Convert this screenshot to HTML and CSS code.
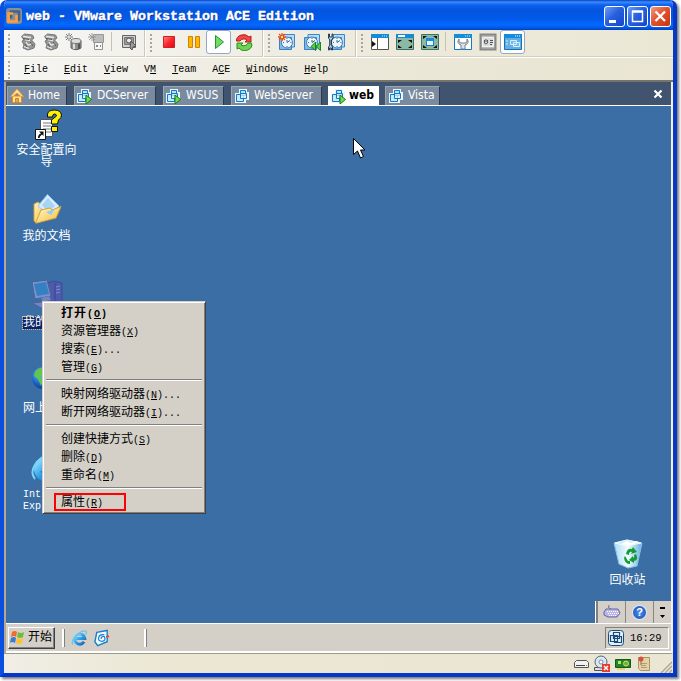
FILE: index.html
```html
<!DOCTYPE html>
<html lang="zh-CN">
<head>
<meta charset="utf-8">
<title>web - VMware Workstation ACE Edition</title>
<link rel="stylesheet" href="styles.css">
</head>
<body>
<svg class="defs" aria-hidden="true">
  <defs>
    <linearGradient id="folder" x1="0" y1="0" x2="1" y2="1"><stop offset="0" stop-color="#fffbd0"/><stop offset="1" stop-color="#f3bd3b"/></linearGradient>
    <linearGradient id="ie" x1="0" y1="0" x2="1" y2="1"><stop offset="0" stop-color="#9be3ff"/><stop offset=".5" stop-color="#2fa1e8"/><stop offset="1" stop-color="#1263b4"/></linearGradient>
    <linearGradient id="red" x1="0" y1="0" x2="1" y2="1"><stop offset="0" stop-color="#ff8a80"/><stop offset=".5" stop-color="#f82830"/><stop offset="1" stop-color="#d80b12"/></linearGradient>
    <linearGradient id="bin" x1="0" y1="0" x2="1" y2="0"><stop offset="0" stop-color="#a9dcf4"/><stop offset=".5" stop-color="#f1fbff"/><stop offset="1" stop-color="#62b0df"/></linearGradient>
    <radialGradient id="globe" cx=".4" cy=".3" r=".8"><stop offset="0" stop-color="#6cc8ff"/><stop offset=".6" stop-color="#1863c8"/><stop offset="1" stop-color="#0b2c7a"/></radialGradient>
  </defs>
  <symbol id="vm" viewBox="0 0 14 14">
    <path d="M0 4h4V0h8v3h2v8h-3v3H0z" fill="#e9f5fd"/>
    <path d="M1.500 5.500h7v7h-7z" fill="#c6eaff" stroke="#1379c4"/>
    <path d="M5.500 1.500h5v5h-5z" fill="#a5dcff" fill-opacity=".75" stroke="#1379c4"/>
    <path d="M5.500 4.500h6v5h-6z" fill="#e4f5ff" fill-opacity=".7" stroke="#1379c4"/>
  </symbol>
  <symbol id="clock" viewBox="0 0 18 18">
    <path d="M5 1.500h11.500V14H5z" fill="#b8dcf8" stroke="#3b87c7"/>
    <path d="M1.500 4.500h12v12h-12z" fill="#7fb9ea" stroke="#3b80c0"/>
    <circle cx="9" cy="9.500" r="5.500" fill="#eef7fd" stroke="#397bb7"/>
    <path d="M9 9.500V7M9 9.500l3-2M9 5v1M9 13v1M5 9.500h1M12.500 9.500h1" stroke="#426784" fill="none"/>
  </symbol>
  <symbol id="usbdev" viewBox="0 0 16 18">
    <path d="M1.500 3.500l3-2.500 8 1 1.500 3-2.500 2 3.500 4-1 4-6 2-5-2 1-3-2-4 2-1z" fill="#969696" stroke="#777"/>
    <path d="M3 3.500l8 1M5 6.500l5 1M6 9l2 3 4-1M4 13.500l5 2" stroke="#e7e7e7" stroke-width="1.300" fill="none"/>
    <path d="M3 5.500l6 1M5 11l2 3M10 9l3 4" stroke="#555" fill="none"/>
  </symbol>
  <symbol id="iee" viewBox="0 0 18 18">
    <path d="M13.800 13A5.400 5.400 0 1 1 14.600 9.500H5" fill="none" stroke="url(#ie)" stroke-width="3.200"/>
    <path d="M2 16C-1 12 8 2 14 1.500c3-.2 2.500 2.500 1.500 4" fill="none" stroke="#65c6ed" stroke-width="1.300"/>
  </symbol>
</svg>

<main class="window">
  <header class="titlebar">
    <svg class="applogo" viewBox="0 0 16 16"><rect x="0" y="0" width="16" height="16" rx="3" fill="#8a8f96"/><path d="M5 10.500v-7h8v8h-3" fill="none" stroke="#3f6588" stroke-width="2.500"/><path d="M7 5.500H2.500v8h8V7" fill="none" stroke="#ff9d42" stroke-width="2.700"/></svg>
    <h1>web - VMware Workstation ACE Edition</h1>
    <div class="caption">
      <button class="cap"><svg viewBox="0 0 21 21"><path d="M5 14h7v3H5z" fill="#fff"/></svg></button>
      <button class="cap"><svg viewBox="0 0 21 21"><path d="M5 6h11M5 5h11M5.500 5v10.500h10V5" fill="none" stroke="#fff" stroke-width="1.500"/></svg></button>
      <button class="cap close"><svg viewBox="0 0 21 21"><path d="M5.500 5.500l9.500 9.500M15 5.500L5.500 15" stroke="#fff" stroke-width="2.300"/></svg></button>
    </div>
  </header>

  <div class="toolbar">
    <div class="group g1"><i class="grip"></i>
      <button><svg viewBox="0 0 16 18"><use href="#usbdev" width="16" height="18"/></svg></button>
      <button><svg viewBox="0 0 16 18"><use href="#usbdev" width="16" height="18"/></svg></button>
      <button><svg viewBox="0 0 18 18"><path d="M6 8v7q5 3.500 10 0V8z" fill="#909090" stroke="#606060"/><path d="M8 9v7h2V9z" fill="#ddd"/><path d="M13 9v7h2V9z" fill="#555"/><ellipse cx="11" cy="8" rx="5" ry="2.500" fill="#ddd" stroke="#777"/><path d="M4 0v8M0 4h8M1 1l6 6M7 1L1 7" stroke="#777"/><path d="M4 3v2M3 4h2" stroke="#fff"/></svg></button>
      <button><svg viewBox="0 0 18 18"><path d="M5.500 1.500h10v8h-10z" fill="#bcbcbc" stroke="#989898"/><path d="M6.500 9.500h8v7h-8z" fill="#f8f8f8" stroke="#929292"/><path d="M8 12h2v2H8zM12 12h1v2h-1z" fill="#888"/><path d="M4 0v8M0 4h8M1 1l6 6M7 1L1 7" stroke="#999"/></svg></button>
      <i class="split"></i>
      <button class="last"><svg viewBox="0 0 18 18"><path d="M2.500 2.500h13v12h-13z" fill="#d1d1d1" stroke="#666"/><path d="M4.500 4.500h9v7h-9z" fill="#9a9a9a" stroke="#777"/><circle cx="9" cy="7.500" r="2.500" fill="#eee" stroke="#555"/><path d="M11 8l5 5-3 1-1 3-2-2z" fill="#9a9a9a" stroke="#555"/></svg></button>
    </div>
    <div class="group g2"><i class="grip"></i>
      <button><svg viewBox="0 0 18 18"><path d="M3.500 3.500h11v11h-11z" fill="url(#red)" stroke="#d51c20"/></svg></button>
      <button><svg viewBox="0 0 18 18"><path d="M3.500 3.500h4v11h-4zM10.500 3.500h4v11h-4z" fill="#ffb800" stroke="#d28200"/></svg></button>
      <button class="on"><svg viewBox="0 0 18 18"><path d="M5.500 2.500l8 6.500-8 6.500z" fill="#72dc67" stroke="#219732"/></svg></button>
      <button><svg viewBox="0 0 18 18"><path d="M1.500 8A7 6 0 0 1 14 4l2-1v6h-6l2-2a4.500 4 0 0 0-7 1z" fill="#f24643" stroke="#b81c1c"/><path d="M16.500 10A7 6 0 0 1 4 15l-2 1v-6h6l-2 2a4.500 4 0 0 0 7-2z" fill="#70d451" stroke="#278c25"/></svg></button>
    </div>
    <div class="group g3"><i class="grip"></i>
      <button><svg viewBox="0 0 18 18"><use href="#clock"/><path d="M4 0v8M0 4h8M1 1l6 6M7 1L1 7" stroke="#f44d18" stroke-width="1.300"/><path d="M3 4h2" stroke="#fff35c" stroke-width="2"/></svg></button>
      <button><svg viewBox="0 0 18 18"><use href="#clock"/><path d="M12.500 9v8.500l-4.500-4zM17.500 9v8.500l-4.500-4z" fill="#57cc46" stroke="#168425"/></svg></button>
      <button><svg viewBox="0 0 18 18"><use href="#clock"/><path d="M.5 1v4l1.500 2v5L.5 14v3h1v-2h2v2h1v-3L3.500 12V7L5 5V1H4v3H1.500V1z" fill="#c7d3df" stroke="#263e56"/></svg></button>
    </div>
    <div class="group g4"><i class="grip"></i>
      <button><svg viewBox="0 0 18 18"><path d="M.5 1.500h17v15H.5z" fill="#fff" stroke="#545454"/><path d="M0 1h18v4H0z" fill="#168bd5"/><path d="M6.500 5v11" stroke="#555"/><path d="M1 8l4 3-4 3z" fill="#111"/><path d="M11 3h1M13 3h1M15 3h1" stroke="#c5e9ff"/></svg></button>
      <button><svg viewBox="0 0 18 18"><path d="M.5 1.500h17v15H.5z" fill="#8abaa5" stroke="#406e65"/><path d="M0 1h18v4H0z" fill="#1989d6"/><path d="M2 2h7v2H2z" fill="#fff"/><path d="M2 7h4l-4 3zM16 7h-4l4 3zM2 15h4l-4-3zM16 15h-4l4-3z" fill="#111"/></svg></button>
      <button><svg viewBox="0 0 18 18"><path d="M.5 1.500h17v15H.5z" fill="#89b9a3" stroke="#3d7463"/><path d="M2 3h4L2 6zM16 3h-4l4 3zM2 15h4l-4-3zM16 15h-4l4-3z" fill="#111"/><rect x="5.500" y="5.500" width="7" height="7" fill="#e9f3fa" stroke="#187fd0"/><path d="M5 5h8v3H5z" fill="#168bde"/></svg></button>
      <i class="split"></i>
      <button><svg viewBox="0 0 18 18"><path d="M.5 1.500h17v15H.5z" fill="#fff" stroke="#147bc2"/><path d="M0 1h18v4H0z" fill="#168bd8"/><path d="M11 3h1M13 3h1M15 3h1" stroke="#c5e9ff"/><path d="M5 6q-3 4 2 6v4h4v-4q5-2 2-6v3l-2 1H7L5 9z" fill="#dde2e9" stroke="#728091"/></svg></button>
      <button><svg viewBox="0 0 18 18"><path d="M1.500 1.500h15v15h-15z" fill="#bbb" stroke="#888" stroke-width="2"/><path d="M3.500 4.500h11v9h-11z" fill="#ddd" stroke="#f2f2f2"/><path d="M7 6v3M5.500 7q-1 4 1.500 4t1.500-4M11 7.500h3M11 9.500h3M11 11.500h2" fill="none" stroke="#555"/></svg></button>
      <button class="on"><svg viewBox="0 0 18 18"><path d="M.5 1.500h17v15H.5z" fill="#62afe4" stroke="#176fba"/><path d="M0 1h18v4H0z" fill="#168bd8"/><path d="M11 3h1M13 3h1M15 3h1" stroke="#fff"/><path d="M6.500 7.500h6v4h-6zM9.500 9.500h6v4h-6z" fill="#71baf0" stroke="#d6efff"/><path d="M2 8h2M2 11h2" stroke="#d6efff"/></svg></button>
    </div>
  </div>

  <nav class="menubar"><i class="grip"></i>
    <span><u>F</u>ile</span><span><u>E</u>dit</span><span><u>V</u>iew</span><span>V<u>M</u></span><span><u>T</u>eam</span><span>A<u>C</u>E</span><span><u>W</u>indows</span><span><u>H</u>elp</span>
  </nav>

  <section class="guest">
    <div class="tabs">
      <div class="tab home"><svg viewBox="0 0 16 16"><path d="M3.500 8h9v6.500h-9z" fill="#ffe39b" stroke="#e28b25"/><path d="M8 1l6.500 7.500H12L8 5 4 8.500H1.500z" fill="#ffe39b" stroke="#ed982c"/><path d="M6.500 10.500h3v4h-3z" fill="#e5a941" stroke="#c98928"/></svg><span>Home</span></div>
      <div class="tab dc"><svg viewBox="0 0 16 16"><use href="#vm" width="14" height="14"/><path d="M9 6l5.500 4.500L9 15z" fill="#6ae04c" stroke="#147b1c"/></svg><span>DCServer</span></div>
      <div class="tab wsus"><svg viewBox="0 0 16 16"><use href="#vm" width="14" height="14"/><path d="M9 6l5.500 4.500L9 15z" fill="#6ae04c" stroke="#147b1c"/></svg><span>WSUS</span></div>
      <div class="tab ws"><svg viewBox="0 0 16 16"><use href="#vm" x="1" y="0" width="14" height="14"/></svg><span>WebServer</span></div>
      <div class="tab active"><svg viewBox="0 0 16 16"><use href="#vm" width="14" height="14"/><path d="M9 6l5.500 4.500L9 15z" fill="#6ae04c" stroke="#147b1c"/></svg><span>web</span></div>
      <div class="tab vista"><svg viewBox="0 0 16 16"><use href="#vm" x="1" y="0" width="14" height="14"/></svg><span>Vista</span></div>
      <button class="tabclose"><svg viewBox="0 0 10 10"><path d="M1.500 1.500l7 7M8.500 1.500l-7 7" stroke="#fff" stroke-width="2.200"/></svg></button>
    </div>

    <div class="desktop">
      <div class="shortcut s1">
        <svg viewBox="0 0 32 32"><path d="M9.500 11.500h12v17h-12z" fill="#fff" stroke="#555"/><path d="M12 15h8M12 18h8M12 21h8M12 24h8" stroke="#777"/><path d="M16.500 9V6q1-4 7-4t7 5q0 3-3 5l-1 4h-6v-4l5-4q0-2-2-2t-2 3z" fill="#fff200" stroke="#111"/><path d="M20.500 18.500h6v5h-6z" fill="#fff200" stroke="#111"/><path d="M4.500 21.500h10v10h-10z" fill="#fff" stroke="#111"/><path d="M7 30q0-4 3-4.500L8 23.500h4.500V28l-1.500-1.500Q8.500 28 8.500 30z" fill="#111"/></svg>
        <span>安全配置向<br>导</span></div>
      <div class="shortcut s2">
        <svg viewBox="0 0 32 32"><path d="M3 11l4-2 4 3v15l-6 3-2-2z" fill="url(#folder)" stroke="#d89b2a"/><path d="M7 13L16.500 1.500 28 13l-8 11z" fill="#d7edff" stroke="#91c8f1"/><path d="M11 12l6-7 7 8-7 6z" fill="#a8d3f5"/><path d="M4.500 30L10 17l9-2 2 2 9-3.500L25 25 6 30z" fill="url(#folder)" stroke="#dfa131"/><path d="M15 19l9-3-4 6z" fill="#91ccef"/></svg>
        <span>我的文档</span></div>
      <div class="shortcut s3">
        <svg viewBox="0 0 32 32"><path d="M17 4l6-2 8 2v19l-6 2-8-3z" fill="#4c5bac" stroke="#414a95"/><path d="M24 4v20" stroke="#3d4792"/><path d="M25 8l4-1M25 11l4-1M25 14l4-1" stroke="#7f90cb"/><path d="M1 3l15-2 4 16-16 3z" fill="#7596cc" stroke="#506098"/><path d="M3 5l12-2 3 12-12 2z" fill="#3580c3"/><path d="M10 19l8-2 2 4-7 3z" fill="#7585c4"/><path d="M1 24l18-2 8 6-13 3z" fill="#7585c4" stroke="#4d6199"/></svg>
        <span class="selected">我的</span></div>
      <div class="shortcut s4">
        <svg viewBox="0 0 32 32"><circle cx="12" cy="13" r="11" fill="url(#globe)"/><path d="M4 7q5-6 11-3l-2 5-4 2 3 4-2 6-3-7-4-3z" fill="#62c746"/></svg>
        <span>网上</span></div>
      <div class="shortcut s5">
        <svg viewBox="0 0 32 32"><path d="M23 24A9.500 9.500 0 1 1 25 17H9" fill="none" stroke="url(#ie)" stroke-width="6"/><path d="M4 28C-2 21 3 8 20 2" fill="none" stroke="#77d4fa" stroke-width="2"/></svg>
        <span>Int</span><span>Expl</span></div>
      <div class="shortcut s6">
        <svg viewBox="0 0 32 32"><path d="M2 6l13-3 15 3-5 23-9 2-9-4z" fill="url(#bin)" stroke="#85c4e6"/><path d="M3 6l12 3 14-3-14-3z" fill="#c7edff" stroke="#f1fbff"/><path d="M9 7l6-3 4 2 5-2 3 1-11 4z" fill="#fff"/><path d="M14 17q1-6 6-5l1-2 4 5-6 2 1-2q-3-1-3 3zM24 17q3 6-2 7v2l-5-3 4-4v2q2-1 1-3zM13 19l3 5h2v3q-5 0-6-6z" fill="#169b35"/></svg>
        <span>回收站</span></div>

      <ul class="context">
        <li class="default">打开<small>(<u>O</u>)</small></li><li>资源管理器<small>(<u>X</u>)</small></li><li>搜索<small>(<u>E</u>)...</small></li><li>管理<small>(<u>G</u>)</small></li>
        <li class="rule"></li>
        <li>映射网络驱动器<small>(<u>N</u>)...</small></li><li>断开网络驱动器<small>(<u>I</u>)...</small></li>
        <li class="rule"></li>
        <li>创建快捷方式<small>(<u>S</u>)</small></li><li>删除<small>(<u>D</u>)</small></li><li>重命名<small>(<u>M</u>)</small></li>
        <li class="rule"></li>
        <li class="marked">属性<small>(<u>R</u>)</small></li>
      </ul>

      <svg class="pointer" viewBox="0 0 12 21"><path d="M.5.5v16l4-3.500 3 7 3-1.500-3-6.500h4.500z" fill="#fff" stroke="#000"/></svg>

      <div class="langbar">
        <span class="key"><svg viewBox="0 0 18 18"><path d="M6 2q-2 3 2 4" fill="none" stroke="#6d6b9c"/><path d="M1 9l2-3h12l2 4-3 4H5l-4-2z" fill="#b9b6e4" stroke="#6962a8"/><path d="M4 8.500h11M5 10.500h11M6 12.500h8" stroke="#fff" stroke-dasharray="1 1"/></svg></span>
        <span class="help"><b>?</b></span>
        <span class="more"><svg viewBox="0 0 7 14"><path d="M1 2h5v2H1zM1 10h5l-2.500 3z" fill="#000"/></svg></span>
      </div>
    </div>

    <footer class="taskbar">
      <button class="start"><svg viewBox="0 0 17 16"><path d="M3 2q3-2 5 0L7 7Q5 5 2 7z" fill="#f36a2b"/><path d="M9 2q3 2 6 0l-1 5q-3 2-6 0z" fill="#70bd36"/><path d="M2 8q3-2 5 0l-1 5q-3-2-5 0z" fill="#357bd7"/><path d="M8 8q3 2 6 0l-1 5q-3 2-6 0z" fill="#ffc22b"/></svg><span>开始</span></button>
      <i class="bar b1"></i>
      <svg class="quick q1" viewBox="0 0 18 18"><use href="#iee"/></svg>
      <svg class="quick q2" viewBox="0 0 18 18"><path d="M4 3l11-2v12l-10 4-3-4z" fill="#f1faff" stroke="#1782c8" stroke-width="1.500"/><path d="M12 5.500q-5-1-6 3t4 4q4-1 2-5-3-1-3.500 2.500" fill="none" stroke="#1c83d4" stroke-width="1.300"/><path d="M14 8l3-1" stroke="#ed4628" stroke-width="2"/></svg>
      <i class="bar b2"></i>
      <div class="tray"><svg viewBox="0 0 16 16"><rect x=".5" y=".5" width="15" height="15" rx="3" fill="#e8f0f6" stroke="#174c79"/><path d="M2.500 5.500h7v6h-7zM5.500 2.500h6v6h-6zM6.500 6.500h7v6h-7z" fill="none" stroke="#174c79" stroke-width="1.200"/></svg><time>16:29</time></div>
    </footer>
  </section>

  <div class="statusbar">
    <svg viewBox="0 0 18 18"><path d="M2.500 7.500l2-2h10l2 2v5h-14z" fill="#f2f2f2" stroke="#555"/><path d="M4 10.500h9" stroke="#444"/><path d="M14 10h1v1h-1z" fill="#54ab42"/></svg>
    <svg viewBox="0 0 18 18"><path d="M1.500 12.500h12v3h-12z" fill="#ddd" stroke="#555"/><circle cx="8" cy="7" r="6" fill="#d9e7f3" stroke="#526579"/><circle cx="8" cy="7" r="2" fill="#fff" stroke="#738ba0"/><path d="M9 9h8v8H9z" fill="#e93b29"/><path d="M11 11l4 4M15 11l-4 4" stroke="#fff" stroke-width="1.500"/></svg>
    <svg viewBox="0 0 18 18"><path d="M1.500 4.500h15v8h-15z" fill="#238329" stroke="#11591d"/><path d="M4 6h3v3H4z" fill="#b1e96c"/><circle cx="12" cy="8.500" r="2.500" fill="#61b745" stroke="#dcdb57"/><path d="M4 13v2M6 13v2M8 13v2M10 13v2" stroke="#e0bf35"/></svg>
    <svg viewBox="0 0 18 18"><path d="M3.500 2.500h11v13h-9l-2-2z" fill="#e4d2a0" stroke="#aa956e"/><path d="M6 8.500h6M6 10.500h5M6 12.500h6" stroke="#b49a7d"/><path d="M6 6v4" stroke="#776"/><circle cx="6" cy="4" r="2.500" fill="#da5144"/></svg>
    <svg class="resize" viewBox="0 0 12 12"><path d="M1 12L12 1M5 12l7-7M9 12l3-3" stroke="#aaa58f" stroke-width="1.400"/></svg>
  </div>
</main>
</body>
</html>
```
FILE: styles.css
```css
* { box-sizing: border-box; }
body { margin: 0; width: 681px; height: 681px; overflow: hidden; background: #fff; font: 12px/12px "Liberation Mono", "Noto Sans CJK SC", monospace; color: #000; }
button { padding: 0; border: 0; background: none; font: inherit; color: inherit; }
svg { display: block; flex: none; }
u { text-underline-offset: 1px; text-decoration-thickness: 1px; }
.defs { width: 0; height: 0; position: absolute; }

.window { width: 677px; height: 677px; display: flex; flex-direction: column; border: 4px solid #0a4fe0; border-top: 0; border-right-color: #0637c5; border-bottom-color: #0637cc; border-radius: 7px 7px 0 0; background: #ece9d8; box-shadow: 2px 2px 3px #777; overflow: hidden; }

.titlebar { height: 30px; flex: none; margin: 0 -4px; padding: 3px 6px 0 6px; display: flex; align-items: center; background: linear-gradient(#0a3fc0 0, #3b8cff 2px, #0c62ee 5px, #0355dd 10px, #0359e8 18px, #0369ff 25px, #0157e6 28px, #0040bd 30px); }
.applogo { width: 16px; height: 16px; margin-top: -2px; }
h1 { margin: 0 auto 0 4px; font: bold 13.33px/20px "Liberation Mono", monospace; color: #fff; text-shadow: 1px 1px #082b91; white-space: pre; -webkit-text-stroke: .4px #fff; }
.caption { display: flex; gap: 2px; }
.cap { width: 21px; height: 21px; border: 1px solid #fff; border-radius: 3px; background: linear-gradient(135deg, #6e9df8, #2861df 45%, #1645c8); }
.cap svg { width: 21px; height: 21px; margin: -1px; }
.close { background: linear-gradient(135deg, #f19a80, #e3532e 45%, #c73412); }

.toolbar { height: 28px; flex: none; display: flex; border-bottom: 1px solid #fff; background: linear-gradient(90deg, #f5f5f4, #edeadb 60%, #ebe7d5); box-shadow: inset 0 -1px #d3cfbd; }
.group { display: flex; align-items: flex-start; border-right: 1px solid #fff; box-shadow: inset -1px 0 #cbc7b5; }
.g1 { width: 142px; } .g2 { width: 118px; } .g3 { width: 93px; } .g4 { border: 0; box-shadow: none; }
.grip { flex: none; width: 10px; height: 18px; margin-top: 4px; background: radial-gradient(circle at 5px 1px, #aaa797 1px, transparent 1.500px) 0 0 / 10px 4px; }
.group button { width: 25px; height: 24px; display: flex; justify-content: center; align-items: center; }
.group button svg { width: 18px; height: 18px; }
.g1 .grip { width: 12px; }
.g1 button { width: 23px; }
.group .last { width: 26px; }
.group .on { border: 1px solid #91a9c6; border-radius: 3px; background: #fff; }
.split { width: 8px; height: 19px; margin-top: 2px; background: linear-gradient(#c5c2b0, #c5c2b0) 3px 0 / 1px 19px no-repeat; }

.menubar { height: 24px; flex: none; display: flex; gap: 16px; align-items: center; border-bottom: 2px solid #77746b; background: linear-gradient(90deg, #f5f5f3, #ece8d9 50%, #e9e5d2); font-size: 10px; line-height: 14px; padding-top: 1px; }
.menubar .grip { margin-right: -6px; margin-top: 0; }
.menubar span { margin-top: 1px; }

.guest { flex: none; height: 572px; border-left: 2px solid #b1a894; border-right: 2px solid #f3f1e8; border-bottom: 1px solid #9c998d; display: flex; flex-direction: column; }
.tabs { height: 24px; flex: none; padding: 4px 8px 0 1px; display: flex; gap: 7px; background: #40536f; border-bottom: 1px solid #fff; }
.tab { height: 19px; padding: 0 0 1px 2px; display: flex; align-items: center; gap: 3px; color: #fff; font: 12px/18px "DejaVu Sans Condensed", "DejaVu Sans", sans-serif; background: #7a8b9f; border-left: 1px solid #98a5b5; border-top: 1px solid #98a5b5; border-right: 1px solid #2c394c; white-space: nowrap; }
.tab svg { width: 16px; height: 16px; margin: 2px 0 0 0; }
.tab span { margin-top: -1px; }
.home { width: 60px; padding-left: 1px; } .dc { width: 82px; gap: 4px; } .wsus { width: 61px; gap: 4px; } .ws { width: 91px; gap: 4px; margin-left: 0; } .vista { width: 55px; gap: 4px; margin-left: -1px; }
.home svg { margin-top: 0; }
.active { width: 51px; gap: 2px; margin-left: -1px; color: #000; font-weight: bold; background: #fff; border-color: #fff; }
.tabclose { margin: -4px 0 0 auto; }
.tabclose svg { width: 10px; height: 10px; }

.desktop { height: 517px; flex: none; position: relative; background: #3a6ea5; }
.shortcut { position: absolute; left: 3px; width: 75px; display: flex; flex-direction: column; align-items: center; color: #fff; text-align: center; white-space: nowrap; line-height: 12px; }
.shortcut svg { width: 32px; height: 32px; margin: 0 0 6px; }
.shortcut span { line-height: 12px; }
.s1 { top: 2px; } .s2 { top: 87px; } .s3 { top: 173px; } .s4 { top: 259px; } .s5 { top: 345px; } .s6 { left: 584px; top: 431px; }
.s1 svg { margin-bottom: 5px; }
.s3, .s4, .s5 { align-items: flex-start; padding-left: 14px; }
.s3 svg, .s4 svg, .s5 svg { margin-left: 8px; }
.s5 span { font-size: 10px; }
.selected { background: #0a246a; outline: 1px dotted #e0b57d; }

.context { position: absolute; left: 36px; top: 195px; width: 164px; height: 213px; margin: 0; padding: 2px 1px 0; list-style: none; background: #d4d0c8; border: 1px solid; border-color: #d4d0c8 #404040 #404040 #d4d0c8; box-shadow: inset 1px 1px #fff, inset -1px -1px #808080; }
.context li { height: 18px; padding: 1px 0 0 17px; font-size: 12px; line-height: 18px; white-space: nowrap; }
.context small { font-size: 10px; }
.context .default { font-weight: bold; letter-spacing: 1px; }
.context .rule { height: 9px; margin: 0 2px; padding: 0; background: linear-gradient(#808080 50%, #fff 50%) 0 3px / 100% 2px no-repeat; }
.context .marked { width: 72px; margin-left: 10px; padding-left: 7px; outline: 2px solid #ff0000; outline-offset: -2px; }

.pointer { position: absolute; left: 347px; top: 32px; width: 12px; height: 21px; }

.langbar { position: absolute; right: 0; bottom: 0; width: 76px; height: 22px; display: flex; background: #d4d0c8; border-left: 1px solid #fff; }
.langbar span { display: flex; align-items: center; justify-content: center; }
.key { width: 30px; border-left: 2px solid #808080; border-right: 1px solid #8a867e; }
.key svg { width: 18px; height: 18px; }
.help { width: 28px; border-right: 1px solid #8a867e; }
.help b { width: 13px; height: 13px; border-radius: 50%; background: radial-gradient(#4a91f0, #1947ae); color: #fff; font: bold 11px/13px "Liberation Sans", sans-serif; text-align: center; box-shadow: 0 0 0 1px #dce8f6; }
.more { flex: 1; }
.more svg { width: 7px; height: 14px; }

.taskbar { height: 30px; flex: none; display: flex; align-items: flex-start; padding: 3px 2px 0 2px; background: #d4d0c8; border-top: 1px solid #fff; border-bottom: 2px solid #fff; }
.start { width: 47px; height: 22px; display: flex; align-items: center; gap: 2px; padding: 0; white-space: nowrap; border: 1px solid; border-color: #fff #404040 #404040 #fff; box-shadow: inset -1px -1px #808080; }
.start svg { width: 17px; height: 16px; }
.start span { font-size: 12px; margin-top: -1px; }
.bar { width: 3px; height: 18px; margin-top: 2px; border-left: 2px solid #fff; border-right: 1px solid #808080; }
.b1 { margin-left: 7px; }
.quick { width: 17px; height: 18px; margin-top: 2px; }
.q1 { margin-left: 6px; } .q2 { margin-left: 5px; }
.b2 { margin-left: 34px; }
.tray { width: 64px; height: 22px; margin-left: auto; display: flex; align-items: center; gap: 6px; padding-left: 2px; border: 1px solid; border-color: #808080 #fff #fff #808080; }
.tray svg { width: 16px; height: 16px; }
.tray time { font-size: 10.500px; }

.statusbar { height: 19px; flex: none; display: flex; align-items: center; justify-content: flex-end; gap: 3px; padding-right: 1px; background: linear-gradient(90deg, #f0eee5, #ebe7d3 25%, #eae6d3); }
.statusbar svg { width: 18px; height: 18px; }
.statusbar .resize { width: 12px; height: 12px; align-self: flex-end; margin-left: 4px; }
```
